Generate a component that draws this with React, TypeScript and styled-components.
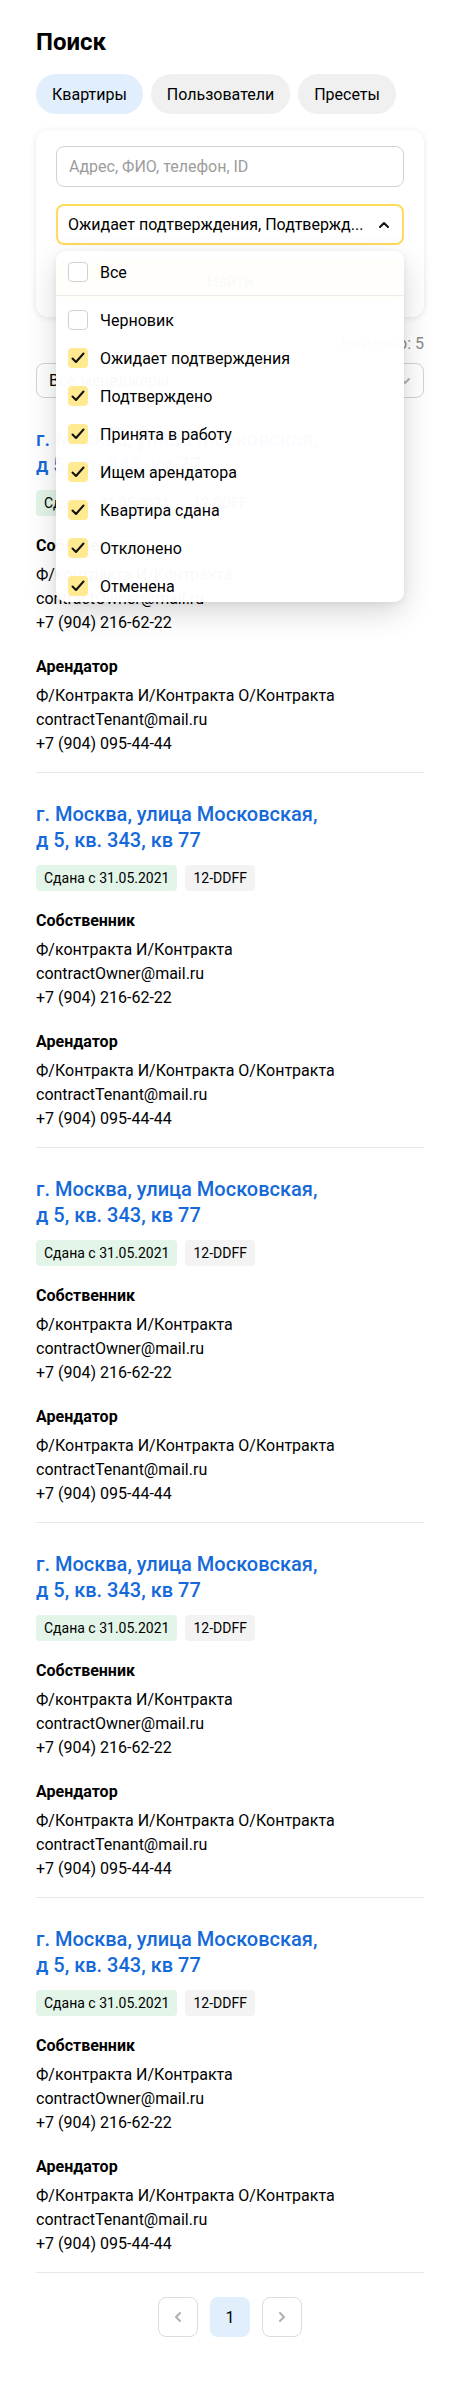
import React from "react";
import styled, { createGlobalStyle } from "styled-components";

const GlobalStyle = createGlobalStyle`
  html, body {
    margin: 0;
    padding: 0;
    background: #fff;
  }
  body {
    font-family: Roboto, "Noto Sans", sans-serif;
    color: #000;
    -webkit-font-smoothing: antialiased;
  }
  * { box-sizing: border-box; }
`;

const Page = styled.main`
  width: 460px;
  padding: 24px 36px 68px;
`;

const Title = styled.h1`
  margin: 0;
  font-size: 24px;
  line-height: 36px;
  font-weight: 700;
`;

const Tabs = styled.nav`
  display: flex;
  gap: 8px;
  margin-top: 14px;
`;

const Tab = styled.button<{ $active?: boolean }>`
  height: 40px;
  padding: 0 16px;
  border: none;
  border-radius: 20px;
  background: ${(p) => (p.$active ? "#e1eefb" : "#f0f0f0")};
  font-family: inherit;
  font-size: 16px;
  color: #000;
`;

const Panel = styled.section`
  margin-top: 16px;
  padding: 16px 20px;
  border-radius: 12px;
  background: #fff;
  box-shadow: 0 1px 6px rgba(0, 0, 0, 0.1);
  display: flex;
  flex-direction: column;
  gap: 16px;
`;

const SearchInput = styled.input`
  height: 41px;
  width: 100%;
  padding: 0 12px;
  border: 1px solid #d3d3d3;
  border-radius: 8px;
  font-family: inherit;
  font-size: 16px;
  color: #000;
  margin-bottom: 1px;
  &::placeholder { color: #9c9c9c; }
`;

const SelectWrap = styled.div`
  position: relative;
`;

const Select = styled.div<{ $open?: boolean }>`
  height: 41px;
  display: flex;
  align-items: center;
  justify-content: space-between;
  padding: 0 10px 0 10px;
  border: ${(p) => (p.$open ? "2px solid #fedb5b" : "1px solid #d3d3d3")};
  border-radius: 8px;
  font-size: 16px;
`;

const SelectText = styled.span`
  white-space: nowrap;
  overflow: hidden;
`;

const Dropdown = styled.ul`
  position: absolute;
  left: 0;
  right: 0;
  top: calc(100% + 6px);
  height: 351px;
  margin: 0;
  padding: 2px 0 0;
  list-style: none;
  overflow: hidden;
  border-radius: 10px;
  background: rgba(255, 255, 255, 0.975);
  box-shadow: 0 10px 30px rgba(0, 0, 0, 0.16), 0 2px 6px rgba(0, 0, 0, 0.06);
  z-index: 10;
`;

const Option = styled.li`
  height: 38px;
  display: flex;
  align-items: center;
  gap: 12px;
  padding: 0 12px;
  font-size: 16px;
`;

const Divider = styled.li`
  height: 1px;
  margin: 4px 0 5px;
  background: #ececec;
`;

const Box = styled.span<{ $checked?: boolean }>`
  width: 20px;
  height: 20px;
  flex: none;
  border-radius: 4px;
  display: flex;
  align-items: center;
  justify-content: center;
  border: ${(p) => (p.$checked ? "none" : "1px solid #d0d0d0")};
  background: ${(p) => (p.$checked ? "#ffe991" : "#fff")};
`;

const FindButton = styled.button`
  height: 40px;
  border: none;
  border-radius: 8px;
  background: #ffdb4d;
  font-family: inherit;
  font-size: 16px;
  color: #000;
`;

const Count = styled.div`
  margin-top: 17px;
  text-align: right;
  font-size: 16px;
  line-height: 20px;
  color: #8a8a8a;
`;

const Filter = styled.div`
  margin-top: 9px;
  height: 35px;
  display: flex;
  align-items: center;
  justify-content: space-between;
  padding: 0 10px 0 12px;
  border: 1px solid #d3d3d3;
  border-radius: 8px;
  font-size: 16px;
`;

const List = styled.div`
  display: flex;
  flex-direction: column;
`;

const Card = styled.article`
  padding: 28px 0 16px;
  border-bottom: 1px solid #e8e8e8;
`;

const Address = styled.a`
  display: block;
  font-size: 20px;
  line-height: 26px;
  font-weight: 500;
  color: #1569d9;
  text-decoration: none;
`;

const Badges = styled.div`
  display: flex;
  gap: 8px;
  margin-top: 12px;
`;

const Badge = styled.span<{ $tone: "green" | "gray" }>`
  height: 26px;
  line-height: 26px;
  padding: 0 8px;
  border-radius: 4px;
  font-size: 14px;
  background: ${(p) => (p.$tone === "green" ? "#e2f5e8" : "#f3f3f3")};
`;

const Section = styled.div<{ $gap: number }>`
  margin-top: ${(p) => p.$gap}px;
`;

const SectionTitle = styled.h3`
  margin: 0 0 7px;
  font-size: 16px;
  line-height: 20px;
  font-weight: 700;
`;

const Line = styled.div`
  font-size: 16px;
  line-height: 24px;
`;

const Pager = styled.div`
  display: flex;
  justify-content: center;
  gap: 12px;
  margin-top: 24px;
`;

const PageBtn = styled.button<{ $current?: boolean }>`
  width: 40px;
  height: 40px;
  border-radius: 8px;
  border: ${(p) => (p.$current ? "none" : "1px solid #dcdcdc")};
  background: ${(p) => (p.$current ? "#e1eefb" : "#fff")};
  font-family: inherit;
  font-size: 16px;
  color: #000;
  display: flex;
  align-items: center;
  justify-content: center;
  padding: 0;
`;

const Chevron = ({ dir, color, size = 16 }: { dir: "up" | "down" | "left" | "right"; color: string; size?: number }) => {
  const pts: Record<string, string> = {
    up: "4,10 8,6 12,10",
    down: "4,6 8,10 12,6",
    left: "10,4 6,8 10,12",
    right: "6,4 10,8 6,12",
  };
  return (
    <svg width={size} height={size} viewBox="0 0 16 16" fill="none">
      <polyline points={pts[dir]} stroke={color} strokeWidth="2" strokeLinecap="round" strokeLinejoin="round" />
    </svg>
  );
};

const Check = () => (
  <svg width="16" height="16" viewBox="0 0 16 16" fill="none">
    <polyline points="2.5,8.5 6,12 13.5,3.5" stroke="#111" strokeWidth="2" strokeLinecap="round" strokeLinejoin="round" />
  </svg>
);

const statuses: [string, boolean][] = [
  ["Черновик", false],
  ["Ожидает подтверждения", true],
  ["Подтверждено", true],
  ["Принята в работу", true],
  ["Ищем арендатора", true],
  ["Квартира сдана", true],
  ["Отклонено", true],
  ["Отменена", true],
];

const FlatCard = () => (
  <Card>
    <Address href="#">
      г. Москва, улица Московская,
      <br />
      д 5, кв. 343, кв 77
    </Address>
    <Badges>
      <Badge $tone="green">Сдана с 31.05.2021</Badge>
      <Badge $tone="gray">12-DDFF</Badge>
    </Badges>
    <Section $gap={20}>
      <SectionTitle>Собственник</SectionTitle>
      <Line>Ф/контракта И/Контракта</Line>
      <Line>contractOwner@mail.ru</Line>
      <Line>+7 (904) 216-62-22</Line>
    </Section>
    <Section $gap={22}>
      <SectionTitle>Арендатор</SectionTitle>
      <Line>Ф/Контракта И/Контракта О/Контракта</Line>
      <Line>contractTenant@mail.ru</Line>
      <Line>+7 (904) 095-44-44</Line>
    </Section>
  </Card>
);

export default function App() {
  return (
    <>
      <GlobalStyle />
      <Page>
        <Title>Поиск</Title>
        <Tabs>
          <Tab $active>Квартиры</Tab>
          <Tab>Пользователи</Tab>
          <Tab>Пресеты</Tab>
        </Tabs>
        <Panel>
          <SearchInput placeholder="Адрес, ФИО, телефон, ID" />
          <SelectWrap>
            <Select $open>
              <SelectText>Ожидает подтверждения, Подтвержд...</SelectText>
              <Chevron dir="up" color="#111" />
            </Select>
            <Dropdown>
              <Option>
                <Box />
                Все
              </Option>
              <Divider />
              {statuses.map(([label, checked]) => (
                <Option key={label}>
                  <Box $checked={checked}>{checked && <Check />}</Box>
                  {label}
                </Option>
              ))}
            </Dropdown>
          </SelectWrap>
          <FindButton>Найти</FindButton>
        </Panel>
        <Count>Найдено: 5</Count>
        <Filter>
          <span>Все менеджеры</span>
          <Chevron dir="down" color="#b5b5b5" />
        </Filter>
        <List>
          {[0, 1, 2, 3, 4].map((i) => (
            <FlatCard key={i} />
          ))}
        </List>
        <Pager>
          <PageBtn>
            <Chevron dir="left" color="#b0b0b0" />
          </PageBtn>
          <PageBtn $current>1</PageBtn>
          <PageBtn>
            <Chevron dir="right" color="#b0b0b0" />
          </PageBtn>
        </Pager>
      </Page>
    </>
  );
}
